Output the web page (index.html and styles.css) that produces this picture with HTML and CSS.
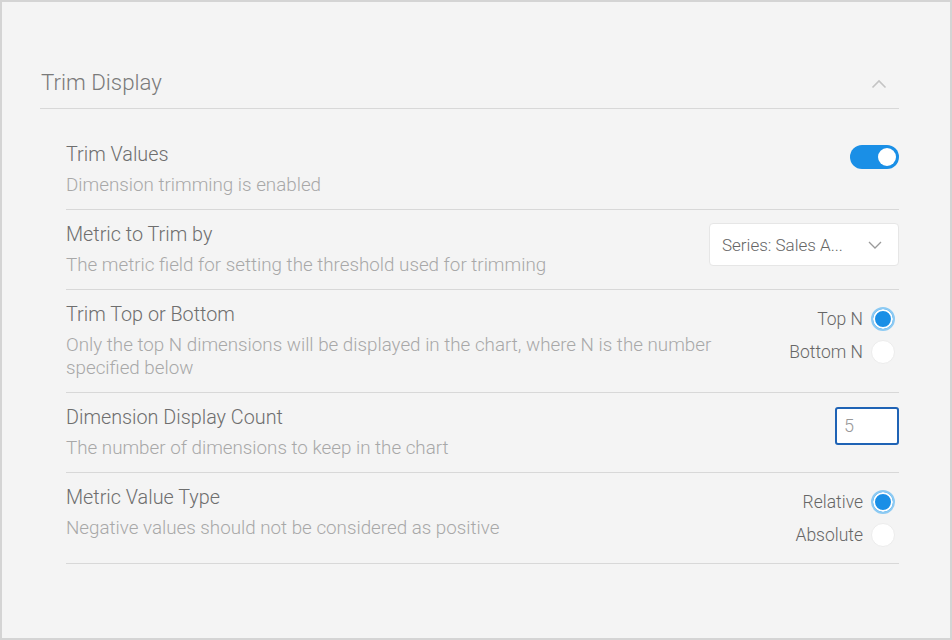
FILE: index.html
```html
<!DOCTYPE html>
<html>
<head>
<meta charset="utf-8">
<link rel="stylesheet" href="styles.css">
</head>
<body>
<div class="frame">
  <div class="section-header">
    <span class="section-title">Trim Display</span>
    <svg class="chev-up" width="16" height="10" viewBox="0 0 16 10"><path d="M1.5 8.5 L8 2 L14.5 8.5" fill="none" stroke="#c4c4c4" stroke-width="1.6"/></svg>
  </div>
  <div class="rows">
    <div class="row">
      <div class="text">
        <div class="title">Trim Values</div>
        <div class="desc">Dimension trimming is enabled</div>
      </div>
      <div class="toggle"><span class="knob"></span></div>
    </div>
    <div class="row">
      <div class="text">
        <div class="title">Metric to Trim by</div>
        <div class="desc">The metric field for setting the threshold used for trimming</div>
      </div>
      <div class="select">
        <span>Series: Sales A...</span>
        <svg width="14" height="8" viewBox="0 0 14 8"><path d="M1 1 L7 7 L13 1" fill="none" stroke="#9a9a9a" stroke-width="1.3"/></svg>
      </div>
    </div>
    <div class="row">
      <div class="text">
        <div class="title">Trim Top or Bottom</div>
        <div class="desc">Only the top N dimensions will be displayed in the chart, where N is the number specified below</div>
      </div>
      <div class="radios">
        <div class="radio-item"><span>Top N</span><span class="radio on"></span></div>
        <div class="radio-item"><span>Bottom N</span><span class="radio"></span></div>
      </div>
    </div>
    <div class="row">
      <div class="text">
        <div class="title">Dimension Display Count</div>
        <div class="desc">The number of dimensions to keep in the chart</div>
      </div>
      <div class="num-input">5</div>
    </div>
    <div class="row">
      <div class="text">
        <div class="title">Metric Value Type</div>
        <div class="desc">Negative values should not be considered as positive</div>
      </div>
      <div class="radios">
        <div class="radio-item"><span>Relative</span><span class="radio on"></span></div>
        <div class="radio-item"><span>Absolute</span><span class="radio"></span></div>
      </div>
    </div>
  </div>
</div>
</body>
</html>
```

FILE: styles.css
```css
html, body {
  margin: 0;
  padding: 0;
}
body {
  font-family: Roboto, "Liberation Sans", sans-serif;
  background: #f4f4f4;
}
.frame {
  width: 952px;
  height: 640px;
  box-sizing: border-box;
  border: 2px solid #d4d4d4;
  background: #f4f4f4;
  padding: 66px 51px 0 38px;
}
.section-header {
  display: flex;
  justify-content: space-between;
  align-items: center;
  height: 28px;
  padding-bottom: 12px;
  border-bottom: 1px solid #d8d8d8;
}
.section-title {
  font-size: 22.3px;
  line-height: 28px;
  color: #7a7a7a;
  font-weight: 300;
  margin-left: 1px;
}
.chev-up {
  margin-right: 12px;
  margin-top: 4px;
}
.rows {
  margin-left: 26px;
  padding-top: 21px;
}
.row {
  display: flex;
  justify-content: space-between;
  align-items: flex-start;
  gap: 40px;
  padding: 13px 0 12px;
  border-bottom: 1px solid #d8d8d8;
}
.title {
  font-size: 19.8px;
  line-height: 24px;
  font-weight: 300;
  color: #6e6e6e;
}
.desc {
  margin-top: 7px;
  font-size: 18.8px;
  line-height: 23px;
  font-weight: 300;
  color: #a8a8a8;
}
.toggle {
  margin-top: 2px;
  width: 49px;
  height: 24px;
  border-radius: 12px;
  background: #1a8fe6;
  display: flex;
  align-items: center;
  justify-content: flex-end;
  padding-right: 3px;
  box-sizing: border-box;
  flex-shrink: 0;
}
.knob {
  width: 18px;
  height: 18px;
  border-radius: 50%;
  background: #ffffff;
}
.select {
  width: 190px;
  height: 43px;
  box-sizing: border-box;
  background: #ffffff;
  border: 1px solid #e6e6e6;
  border-radius: 4px;
  display: flex;
  align-items: center;
  justify-content: space-between;
  padding: 0 16px 0 12px;
  font-size: 17px;
  font-weight: 300;
  color: #666666;
  flex-shrink: 0;
}
.radios {
  margin-top: -1px;
  display: flex;
  flex-direction: column;
  align-items: flex-end;
  flex-shrink: 0;
}
.radio-item {
  height: 33px;
  display: flex;
  align-items: center;
  gap: 8px;
  font-size: 17.5px;
  font-weight: 300;
  color: #666666;
}
.radio {
  width: 24px;
  height: 24px;
  box-sizing: border-box;
  border-radius: 50%;
  background: #ffffff;
  border: 1px solid #ececec;
  margin-right: 4px;
}
.radio.on {
  border: 2px solid #8ccaf3;
  background: #1a8fe6;
  box-shadow: inset 0 0 0 2px #ffffff;
}
.num-input {
  margin-top: 1px;
  width: 64px;
  height: 38px;
  box-sizing: border-box;
  background: #ffffff;
  border: 2px solid #1f63b5;
  border-radius: 3px;
  padding-left: 7px;
  font-size: 18px;
  font-weight: 300;
  line-height: 34px;
  color: #999999;
  flex-shrink: 0;
}
```
